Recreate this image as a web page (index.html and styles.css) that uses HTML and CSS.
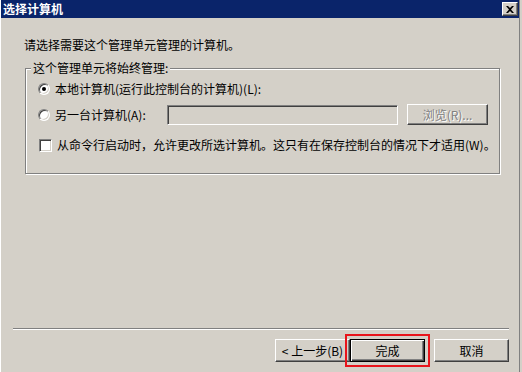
FILE: index.html
```html
<!doctype html>
<html>
<head>
<meta charset="utf-8">
<title>选择计算机</title>
<link rel="stylesheet" href="styles.css">
</head>
<body>
	<div class="window">
		<div class="dialog">
			<div class="titlebar">
				<span class="title">选择计算机</span>
				<span class="close-btn">
					<svg width="8" height="7" viewBox="0 0 8 7"><path d="M0 0L2 0L4 2L6 0L8 0L5 3.5L8 7L6 7L4 5L2 7L0 7L3 3.5Z" fill="#000"/></svg>
				</span>
			</div>

			<div class="content">
				<p class="intro">请选择需要这个管理单元管理的计算机。</p>
				<fieldset class="group">
					<legend>这个管理单元将始终管理:</legend>
					<div class="row row-local">
						<span class="radio checked"></span>
						<span class="label">本地计算机(运行此控制台的计算机)(L):</span>
					</div>
					<div class="row row-other">
						<span class="radio"></span>
						<span class="label label-other">另一台计算机(A):</span>
						<span class="edit"></span>
						<span class="btn btn-browse">浏览(R)...</span>
					</div>
					<div class="row row-check">
						<span class="checkbox"></span>
						<span class="label">从命令行启动时，允许更改所选计算机。这只有在保存控制台的情况下才适用(W)。</span>
					</div>
				</fieldset>
			</div>

			<div class="separator"></div>
			<div class="buttons">
				<span class="btn">&lt; 上一步(B)</span>
				<span class="btn btn-default">完成</span>
				<span class="btn btn-cancel">取消</span>
			</div>
		</div>
	</div>
</body>
</html>
```

FILE: styles.css
```css
* { margin:0; padding:0; box-sizing:border-box; }
body { background:#d4d0c8; font-family:"Noto Sans CJK SC", "Liberation Sans", sans-serif; font-size:12px; color:#000; }
.window { width:522px; height:372px; padding-right:2px; border-left:1px solid #fff; background:#d4d0c8; display:flex; }
.dialog { flex:1; display:flex; flex-direction:column; border-right:1px solid #808080; }

.titlebar { height:18px; background:#0a246a; display:flex; align-items:center; justify-content:space-between; padding:0 1px 0 2px; }
.title { color:#fff; font-weight:bold; font-size:12px; line-height:14px; }
.close-btn { width:16px; height:14px; background:#d4d0c8; display:flex; align-items:center; justify-content:center; border:1px solid; border-color:#fff #404040 #404040 #fff; box-shadow:inset -1px -1px #808080; }

.content { flex:1; padding:20px 19px 0 23px; }
.intro { line-height:14px; }

.group { margin:9px 0 0 1px; padding:4px 0 21px 0; border:1px solid #808080; box-shadow:1px 1px 0 #fff, inset 1px 1px 0 #fff; height:113px; }
.group legend { margin-left:5px; padding:0 2px; line-height:14px; background:#d4d0c8; }

.row { display:flex; align-items:center; }
.row-local { height:20px; padding-left:12px; }
.row-other { height:21px; padding-left:12px; margin-top:5px; }
.row-check { height:14px; padding-left:13px; margin-top:13px; }
.label { margin-left:5px; line-height:14px; white-space:nowrap; }
.label-other { width:112px; }

.radio { position:relative; width:12px; height:12px; border-radius:50%; background:#fff; border:1px solid; border-color:#808080 #fff #fff #808080; box-shadow:inset 1px 1px #404040, inset -1px -1px #d4d0c8; }
.radio.checked::after { content:""; position:absolute; left:3px; top:3px; width:4px; height:4px; border-radius:50%; background:#000; }
.checkbox { width:13px; height:13px; background:#fff; border:1px solid; border-color:#808080 #fff #fff #808080; box-shadow:inset 1px 1px #404040, inset -1px -1px #d4d0c8; }

.edit { width:231px; height:20px; border:1px solid; border-color:#808080 #fff #fff #808080; box-shadow:inset 1px 1px #404040, inset -1px -1px #d4d0c8; }

.btn { display:flex; align-items:center; justify-content:center; width:75px; height:23px; background:#d4d0c8; border:1px solid; border-color:#fff #404040 #404040 #fff; box-shadow:inset -1px -1px #808080; line-height:14px; white-space:nowrap; }
.btn-browse { width:81px; height:21px; margin-left:9px; color:#808080; text-shadow:1px 1px 0 #fff; }
.btn-default { border-color:#000; box-shadow:inset 1px 1px #fff, inset -1px -1px #404040, inset -2px -2px #808080; outline:2px solid #e8141b; outline-offset:3px; }
.btn-cancel { margin-left:9px; }

.separator { height:2px; margin:0 10px 0 12px; border-top:1px solid #808080; border-bottom:1px solid #fff; }
.buttons { display:flex; justify-content:flex-end; padding:9px 10px 10px 0; }
```
